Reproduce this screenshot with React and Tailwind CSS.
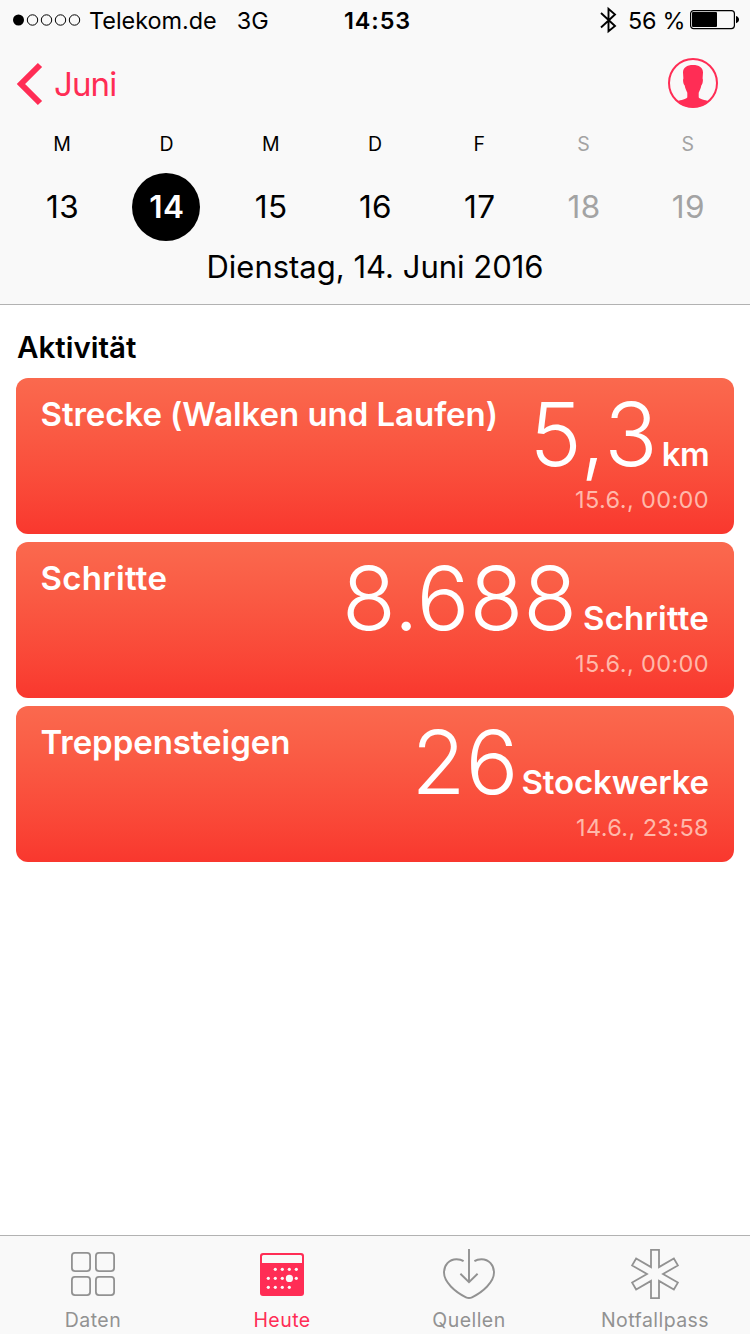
import { useState } from 'react';

const DAYS = [
  { label: 'M', day: 13 },
  { label: 'D', day: 14 },
  { label: 'M', day: 15 },
  { label: 'D', day: 16 },
  { label: 'F', day: 17 },
  { label: 'S', day: 18, weekend: true },
  { label: 'S', day: 19, weekend: true },
];

const ENTRIES = [
  {
    title: 'Strecke (Walken und Laufen)',
    titleClass: 'tracking-[-0.06px]',
    value: '5,3',
    valueClass: 'tracking-[1.2px] mr-[3px]',
    unit: 'km',
    unitClass: 'tracking-[-0.6px]',
    date: '15.6., 00:00',
  },
  {
    title: 'Schritte',
    titleClass: 'tracking-[0.3px]',
    value: '8.688',
    valueClass: 'mr-1.5',
    unit: 'Schritte',
    unitClass: 'tracking-[0.2px]',
    date: '15.6., 00:00',
  },
  {
    title: 'Treppensteigen',
    titleClass: 'tracking-[-0.06px]',
    value: '26',
    valueClass: 'mr-[3px]',
    unit: 'Stockwerke',
    unitClass: 'tracking-[-0.12px]',
    date: '14.6., 23:58',
  },
];

const CALENDAR_DOTS = [
  [19.3, 21.3], [26.3, 21.3], [33.3, 21.3], [40.3, 21.3],
  [12.3, 30.3], [19.3, 30.3], [26.3, 30.3], [40.3, 30.3],
  [12.3, 39.3], [19.3, 39.3], [26.3, 39.3], [33.3, 39.3],
];

function DataIcon() {
  return (
    <svg width="52" height="52" viewBox="0 0 52 52" fill="none" stroke="currentColor" strokeWidth="1.8">
      <rect x="4.9" y="4.9" width="18.2" height="18.2" rx="3" />
      <rect x="28.9" y="4.9" width="18.2" height="18.2" rx="3" />
      <rect x="4.9" y="28.9" width="18.2" height="18.2" rx="3" />
      <rect x="28.9" y="28.9" width="18.2" height="18.2" rx="3" />
    </svg>
  );
}

function TodayIcon() {
  return (
    <svg width="52" height="52" viewBox="0 0 52 52" fill="currentColor">
      <rect x="4" y="5" width="44" height="43" rx="3" />
      <path d="M6 8.5Q6 7 7.5 7H44.5Q46 7 46 8.5V15H6Z" fill="#f9f9f9" />
      {CALENDAR_DOTS.map(([x, y]) => (
        <circle key={`${x}-${y}`} cx={x} cy={y} r="1.6" fill="#f9f9f9" />
      ))}
      <circle cx="33.4" cy="30.4" r="3.6" fill="#f9f9f9" />
    </svg>
  );
}

function SourcesIcon() {
  return (
    <svg width="52" height="52" viewBox="0 0 52 52" fill="none" stroke="currentColor" strokeWidth="1.9">
      <path d="M20.6 13.1C18.4 11.6 15.8 11.2 13.5 11.2C6 11.2 1 17.2 1 24.6C1 34 12 44 23 49.3Q26 50.7 29 49.3C40 44 51 34 51 24.6C51 17.2 46 11.2 38.5 11.2C36.2 11.2 33.6 11.6 31.4 13.1" />
      <path d="M26 1V34M17.4 25.8L26 34.2L34.6 25.8" />
    </svg>
  );
}

function MedicalIdIcon() {
  return (
    <svg width="52" height="52" viewBox="-26 -26 52 52" fill="none" stroke="currentColor" strokeWidth="1.8">
      <path d="M-4 -24.1H4V-6.93L18.87 -15.51L22.87 -8.59L8 0L22.87 8.59L18.87 15.51L4 6.93V24.1H-4V6.93L-18.87 15.51L-22.87 8.59L-8 0L-22.87 -8.59L-18.87 -15.51L-4 -6.93Z" />
    </svg>
  );
}

const TABS = [
  { name: 'Daten', Icon: DataIcon },
  { name: 'Heute', Icon: TodayIcon },
  { name: 'Quellen', Icon: SourcesIcon },
  { name: 'Notfallpass', Icon: MedicalIdIcon },
];

function StatusBar() {
  return (
    <div className="grid h-[41px] grid-cols-[344px_1fr_150px] items-center text-[23.4px]">
      <div className="flex items-center pl-[13px]">
        <svg width="68" height="12" viewBox="0 0 68 12" fill="none" stroke="black" strokeWidth="1">
          <circle cx="5.5" cy="6" r="5.5" fill="black" stroke="none" />
          <circle cx="19.5" cy="6" r="5.2" />
          <circle cx="33.5" cy="6" r="5.2" />
          <circle cx="47.5" cy="6" r="5.2" />
          <circle cx="61.5" cy="6" r="5.2" />
        </svg>
        <span className="ml-2">Telekom.de</span>
        <span className="ml-5">3G</span>
      </div>
      <span className="font-semibold tracking-[0.9px]">14:53</span>
      <div className="flex items-center">
        <svg width="17" height="28" viewBox="0 0 17 28" fill="none" stroke="black" strokeWidth="1.9">
          <path d="M1 7L15 20L8.5 25.2V2.8L15 8.5L1 21.5" />
        </svg>
        <span className="ml-[11px] w-[58px] tracking-[-0.3px] whitespace-nowrap">56 %</span>
        <svg className="ml-1" width="50" height="20" viewBox="0 0 50 20">
          <rect x="0.6" y="0.6" width="43.8" height="18" rx="3" fill="none" stroke="black" strokeWidth="1.2" />
          <rect x="2" y="2" width="25" height="15" rx="1" fill="black" />
          <path d="M46 6C48 6.5 49 8 49 9.6S48 12.7 46 13.2Z" fill="black" />
        </svg>
      </div>
    </div>
  );
}

function EntryCard({ entry }) {
  return (
    <div className="flex h-[156px] justify-between rounded-xl bg-linear-to-b from-[#fa694e] to-[#f9372e] pr-[25px] pl-[24.5px] text-white">
      <h3 className={`mt-4 text-[33px] leading-10 font-semibold whitespace-nowrap ${entry.titleClass}`}>
        {entry.title}
      </h3>
      <div className="flex flex-col items-end whitespace-nowrap">
        <div className="flex h-[104px] items-baseline">
          <span className={`text-[88px] leading-[112px] font-light ${entry.valueClass}`}>{entry.value}</span>
          <span className={`text-[33px] font-semibold ${entry.unitClass}`}>{entry.unit}</span>
        </div>
        <span className="mt-0.5 text-[23.5px] leading-8 tracking-[0.38px] text-[#ffb8aa]">{entry.date}</span>
      </div>
    </div>
  );
}

export default function App() {
  const [selected, setSelected] = useState(14);
  const [tab, setTab] = useState('Heute');

  return (
    <div className="flex h-[1334px] w-[750px] flex-col overflow-hidden bg-white font-['Inter',sans-serif] text-black">
      <header className="h-[305px] border-b border-[#b2b2b2] bg-[#f9f9f9]">
        <StatusBar />

        <div className="flex h-[86px] items-center justify-between pr-8 pl-[15px] text-[#ff2d55]">
          <button className="flex items-center">
            <svg width="28" height="44" viewBox="0 0 28 44" fill="none" stroke="currentColor" strokeWidth="6">
              <path d="M25 3L6 22L25 41" />
            </svg>
            <span className="ml-[11px] pt-px text-[33px] tracking-[-0.9px]">Juni</span>
          </button>
          <svg className="mb-0.5" width="50" height="50" viewBox="-25 -25 50 50" fill="currentColor">
            <circle r="24" fill="none" stroke="currentColor" strokeWidth="2" />
            <path d="M0 -18C6 -18 10 -15.5 10 -10.5L9.6 -4.5C10.3 -3.5 9.8 1 8.3 2.5C7.8 5.5 6.5 8 5.7 9.8V14.2C6.500 16.5 12 16.5 15.8 18.4C11.5 22.5 6 24.5 0 24.5S-11.5 22.5 -15.8 18.4C-12 16.5 -6.5 16.5 -5.7 14.2V9.8C-6.5 8 -7.8 5.5 -8.3 2.5C-9.8 1 -10.3 -3.5 -9.6 -4.5L-10 -10.5C-10 -15.5 -6 -18 0 -18Z" />
          </svg>
        </div>

        <div className="grid grid-cols-7 px-[10px]">
          {DAYS.map(({ label, day, weekend }) => (
            <button
              key={day}
              onClick={() => setSelected(day)}
              className={`flex flex-col items-center ${weekend ? 'text-[#a3a3a3]' : 'text-black'}`}
            >
              <span className="h-[46px] text-[19.5px] leading-[34px]">{label}</span>
              <span
                className={`flex size-[68px] items-center justify-center rounded-full pl-px text-[31.5px] tracking-[0.4px] ${
                  selected === day ? 'bg-black font-semibold text-white' : ''
                }`}
              >
                {day}
              </span>
            </button>
          ))}
        </div>

        <p className="text-center text-[31px] leading-[52px]">Dienstag, {selected}. Juni 2016</p>
      </header>

      <main className="flex-1 px-4">
        <h2 className="h-[73px] pt-[22px] pl-px text-[29.5px] leading-10 font-semibold">Aktivität</h2>
        <div className="flex flex-col gap-2">
          {ENTRIES.map((entry) => (
            <EntryCard key={entry.title} entry={entry} />
          ))}
        </div>
      </main>

      <nav className="grid h-[99px] grid-cols-[186px_192px_182px_190px] border-t border-[#b2b2b2] bg-[#f9f9f9]">
        {TABS.map(({ name, Icon }) => (
          <button
            key={name}
            onClick={() => setTab(name)}
            className={`flex flex-col items-center pt-3 ${tab === name ? 'text-[#ff2d55]' : 'text-[#929292]'}`}
          >
            <Icon />
            <span className="mt-2 text-[19.5px] leading-6 tracking-[0.45px]">{name}</span>
          </button>
        ))}
      </nav>
    </div>
  );
}
